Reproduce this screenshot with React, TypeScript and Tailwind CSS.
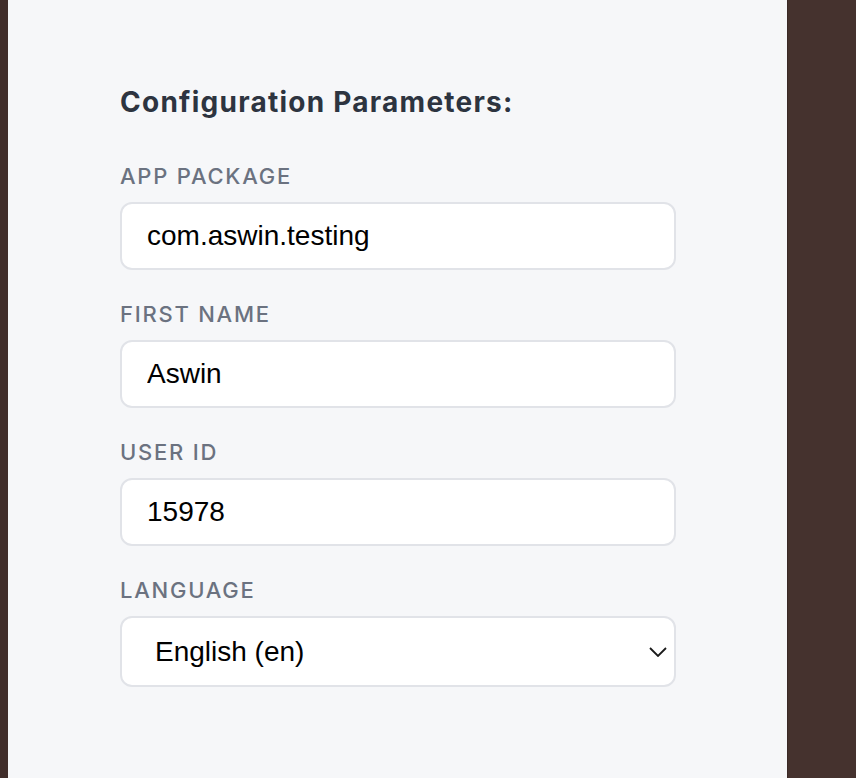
import { useState } from 'react'

const fields = [
  { id: 'appPackage', label: 'App Package', value: 'com.aswin.testing' },
  { id: 'firstName', label: 'First Name', value: 'Aswin' },
  { id: 'userId', label: 'User ID', value: '15978' },
]

export default function App() {
  const [values, setValues] = useState<Record<string, string>>(
    Object.fromEntries(fields.map((f) => [f.id, f.value]))
  )
  const [language, setLanguage] = useState('en')

  return (
    <div className="flex h-[778px] w-[856px] bg-[#45322e]">
      <div className="w-[8px] bg-[#412e2b]" />
      <div className="w-[780px] bg-[#f6f7f9] pl-[112px] pt-[84px] border-r border-[#3a2926]">
        <h2 className="text-[28px] font-bold leading-[36px] text-[#2d3440] font-['Inter',sans-serif] tracking-[1.25px]">
          Configuration Parameters:
        </h2>
        <div className="mt-[42px] flex flex-col gap-[30px] w-[556px]">
          {fields.map((f) => (
            <div key={f.id}>
              <label
                htmlFor={f.id}
                className="block uppercase text-[22px] leading-[28px] tracking-[0.08em] font-medium text-[#6b7280] font-['Inter',sans-serif] mb-[12px]"
              >
                {f.label}
              </label>
              <input
                id={f.id}
                type="text"
                className="block w-full h-[68px] px-[25px] bg-white border-2 border-[#e1e3e8] rounded-[12px] text-[28px] text-black font-['Liberation_Sans',Arial,sans-serif] focus:outline-none"
                value={values[f.id]}
                onChange={(e) => setValues({ ...values, [f.id]: e.target.value })}
              />
            </div>
          ))}
          <div>
            <label
              htmlFor="language"
              className="block uppercase text-[22px] leading-[28px] tracking-[0.08em] font-medium text-[#6b7280] font-['Inter',sans-serif] mb-[12px]"
            >
              Language
            </label>
            <div className="relative">
              <select
                id="language"
                className="block w-full h-[71px] appearance-none pl-[33px] pr-[40px] bg-white border-2 border-[#e1e3e8] rounded-[12px] text-[28px] text-black font-['Liberation_Sans',Arial,sans-serif] focus:outline-none"
                value={language}
                onChange={(e) => setLanguage(e.target.value)}
              >
                <option value="en">English (en)</option>
                <option value="fr">French (fr)</option>
                <option value="de">German (de)</option>
              </select>
              <svg
                className="pointer-events-none absolute right-[9px] top-1/2 -translate-y-1/2"
                width="18"
                height="10"
                viewBox="0 0 18 10"
                fill="none"
                stroke="#1a1a1a"
                strokeWidth="1.8"
              >
                <path d="M1 1l8 8 8-8" />
              </svg>
            </div>
          </div>
        </div>
      </div>
    </div>
  )
}
